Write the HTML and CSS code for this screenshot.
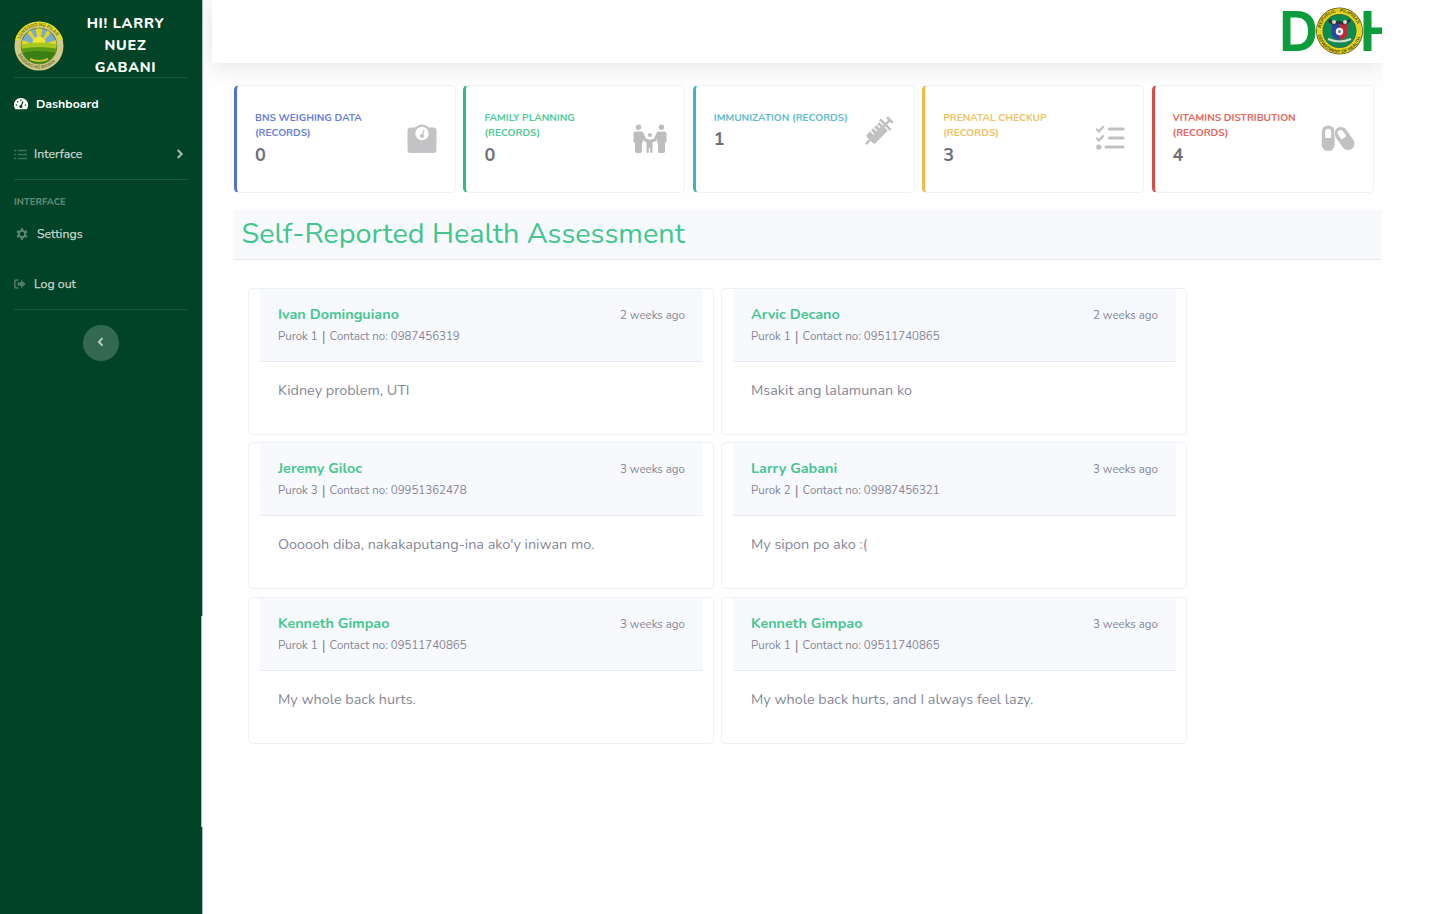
FILE: index.html
```html
<!DOCTYPE html>
<html lang="en">
<head>
<meta charset="utf-8">
<title>Dashboard</title>
<link rel="stylesheet" href="styles.css">
</head>
<body>
<div class="app">
  <aside class="sidebar">
    <div class="brand">
      <svg class="seal" viewBox="0 0 50 50">
        <defs><path id="sealTop" d="M5 25a20 20 0 0 1 40 0"/><path id="sealBottom" d="M2.5 25a22.5 22.5 0 0 0 45 0"/><clipPath id="sealClip"><circle cx="25" cy="25" r="17.5"/></clipPath></defs>
        <circle cx="25" cy="25" r="24.5" fill="#cfc886"/>
        <path d="M3 19a23 23 0 0 1 44 0" fill="none" stroke="#e4db20" stroke-width="4"/>
        <circle cx="25" cy="25" r="18.3" fill="#5d7a2a"/>
        <g clip-path="url(#sealClip)">
          <path fill="#78acc8" d="M6 6h38v20H6z"/>
          <path fill="#e8d51f" d="M25 25 10 8h6zM25 25 21 5h8zM25 25 34 8h6zM25 25 3 17v6zM25 25 47 17v6z"/>
          <circle cx="25" cy="22" r="6.5" fill="#f3e62c"/>
          <path fill="#a9c81f" d="M6 24q19-5 38 0v20H6z"/>
          <path fill="#5b9a16" d="M6 28q19-4 38 0v16H6z"/>
          <path fill="#397f13" d="M6 32q19-4 38 0v16H6z"/>
          <path stroke="#c8c32e" stroke-width="2" fill="none" d="M16 38q9 4 18 0"/>
        </g>
        <g class="seal-text"><text><textPath href="#sealTop" startOffset="12%">LUNGSOD NG PILAR</textPath></text><text><textPath href="#sealBottom" startOffset="12%">SAGISAG NG BAYAN</textPath></text></g>
      </svg>
      <div class="brand-name">HI! LARRY<br>NUEZ<br>GABANI</div>
    </div>
    <hr class="divider">
    <a class="nav nav-active">
      <svg class="ic-dash" viewBox="0 0 14 12"><path fill="#fff" d="M7 0a7 7 0 0 0-6 10.7q.3.6 1 .6h10q.7 0 1-.6A7 7 0 0 0 7 0z"/><path d="m7 8.5 2-5" stroke="#004326" stroke-width="1.2"/><circle cx="6.9" cy="8.5" r="1.5" fill="#004326"/><g fill="#004326"><circle cx="2.4" cy="7" r=".8"/><circle cx="3.8" cy="3.8" r=".8"/><circle cx="6.8" cy="2.3" r=".8"/><circle cx="11.5" cy="7" r=".8"/></g></svg>
      <span>Dashboard</span>
    </a>
    <a class="nav nav-interface">
      <svg class="ic-list" viewBox="0 0 13 11"><path stroke="#3c6f59" stroke-width="1.5" d="M0 1.5h2.3M0 5.5h2.3M0 9.5h2.3M4 1.5h9M4 5.5h9M4 9.5h9"/></svg>
      <span>Interface</span>
      <svg class="ic-chev" viewBox="0 0 8 10"><path d="m1.7 1 4 4-4 4" fill="none" stroke="#a3baaf" stroke-width="2.1"/></svg>
    </a>
    <hr class="divider">
    <div class="nav-heading">INTERFACE</div>
    <a class="nav nav-settings">
      <svg class="ic-gear" viewBox="0 0 12 12"><circle cx="6" cy="6" r="3.2" fill="none" stroke="#5d8775" stroke-width="2"/><path stroke="#5d8775" stroke-width="2.4" d="M6 .3v1.8M6 9.9v1.8M1.1 3.1l1.5.9M9.4 8l1.5.9M1.1 8.9 2.6 8M9.4 4l1.5-.9"/></svg>
      <span>Settings</span>
    </a>
    <a class="nav nav-logout">
      <svg class="ic-out" viewBox="0 0 12 10"><path d="M4.5 1H2Q.8 1 .8 2.2v5.6Q.8 9 2 9h2.5" fill="none" stroke="#4f7d69" stroke-width="1.5"/><path fill="#4f7d69" d="M7 .8 11.8 5 7 9.2V6.7H3.5V3.3H7z"/></svg>
      <span>Log out</span>
    </a>
    <hr class="divider">
    <button class="collapse"><svg viewBox="0 0 6 9"><path d="M4.8 1 1.6 4.4l3.2 3.4" fill="none" stroke="#c0cfc7" stroke-width="1.8"/></svg></button>
    <i class="edge"></i>
  </aside>
  <div class="content">
    <header class="topbar">
      <svg class="doh" viewBox="0 0 100 54">
        <defs><path id="dohTop" d="M38.5 27a19 19 0 0 1 38 0"/><path id="dohBottom" d="M35.5 27a22 22 0 0 0 44 0"/></defs>
        <path fill="#0b9c3c" fill-rule="evenodd" d="M.8 7H14Q33.500 7 33.500 27T14 47H.8zM8.500 13.500v27H14q12 0 12-13.500t-12-13.500z"/>
        <path fill="#0b9c3c" d="M81.500 7h8v16.500H100V30H89.500v17h-8z"/>
        <circle cx="57.500" cy="27" r="23.500" fill="#5d5520"/><circle cx="57.500" cy="27" r="22.700" fill="#e6d51b"/><circle cx="57.500" cy="27" r="17" fill="#29734a"/><circle cx="57.500" cy="27" r="16" fill="#0c8d50"/>
        <path fill="#2848a0" d="M49.500 18h8v18q-6-1-8-5z"/><path fill="#c0293b" d="M57.500 18h8v13q-2 4-8 5z"/>
        <path d="M47 16q4 5 10 2 6 3 11-2" fill="none" stroke="#2d3437" stroke-width="3"/>
        <circle cx="52" cy="18" r="2" fill="#d6d7cd"/><circle cx="63" cy="18" r="2" fill="#d6d7cd"/><circle cx="57.500" cy="27.500" r="3.700" fill="#f4f4f4"/><circle cx="57.500" cy="27.500" r="1.500" fill="#75829f"/>
        <path d="M46 35q11.500 5 23 0" fill="none" stroke="#d7ddd0" stroke-width="2"/>
        <g class="doh-text"><text><textPath href="#dohTop" startOffset="5%">REPUBLIC · PILIPINAS</textPath></text><text><textPath href="#dohBottom" startOffset="6%">DEPARTMENT OF HEALTH</textPath></text></g>
      </svg>
    </header>
    <main>
      <section class="stats">
        <article class="stat blue"><div><h2>BNS WEIGHING DATA<br>(RECORDS)</h2><b>0</b></div>
          <svg class="i-weight" viewBox="0 0 30 30"><rect x=".5" y="3.500" width="29" height="25.500" rx="3" fill="#c3c3c5"/><circle cx="15" cy="9.500" r="9" fill="#c3c3c5"/><circle cx="15" cy="9.500" r="6.700" fill="#fff"/><circle cx="15" cy="12" r="2" fill="#c3c3c5"/><path d="m15 12 2-6" stroke="#c3c3c5" stroke-width="1.300"/></svg></article>
        <article class="stat green"><div><h2>FAMILY PLANNING<br>(RECORDS)</h2><b>0</b></div>
          <svg class="i-family" viewBox="0 0 34 30"><g fill="#bdbdbf"><circle cx="5.500" cy="3.200" r="2.700"/><circle cx="28.500" cy="3.200" r="2.700"/><circle cx="17" cy="11" r="2"/><path d="M2.500 7.500h6q1.500 0 2 1.500l2.300 5.500 3.200 1h2l3.200-1L23.500 9q.5-1.500 2-1.500h6Q33.500 7.500 33.500 10v7q0 1.500-1.500 2v8q0 2-1.500 2h-4q-1.500 0-1.500-2v-8l-1-1v-3l-1 2-3.500 1.500v9q0 1.500-1.200 1.500t-1.200-1.500V24h-1.200v3.500q0 1.500-1.200 1.500t-1.200-1.500v-9L11 17l-1-2v3l-1 1v8q0 2-1.500 2h-4Q2 29 2 27v-8Q.500 18.500.500 17v-7Q.500 7.500 2.500 7.500z"/></g></svg></article>
        <article class="stat teal"><div><h2>IMMUNIZATION (RECORDS)</h2><b>1</b></div>
          <svg class="i-syringe" viewBox="0 0 30 30"><g transform="rotate(-45 15 15)" stroke="#c1c1c3" fill="#c1c1c3"><path d="M-3.500 15h8" stroke-width="2.600"/><path d="M3 9h18.500v12H3l-1-2v-8z" stroke="none"/><path d="M24 7.500v15M30.500 11v8M21 15h9" stroke-width="2.600"/><path d="M9 9v4.500M13.500 9v4.500M18 9v4.500" stroke="#fff" stroke-width="1.300"/></g></svg></article>
        <article class="stat yellow"><div><h2>PRENATAL CHECKUP<br>(RECORDS)</h2><b>3</b></div>
          <svg class="i-tasks" viewBox="0 0 30 30"><g fill="none" stroke="#c1c1c3" stroke-linecap="round" stroke-linejoin="round"><path stroke-width="2.300" d="m2 6.500 2 2 4-4.500M2 15.500l2 2 4-4.500"/><path stroke-width="3.200" d="M14.500 6H28M14.500 15H28M11 24h17"/></g><circle cx="3.800" cy="24" r="2.600" fill="#c1c1c3"/></svg></article>
        <article class="stat red"><div><h2>VITAMINS DISTRIBUTION<br>(RECORDS)</h2><b>4</b></div>
          <svg class="i-caps" viewBox="0 0 34 30"><rect x=".8" y="2.500" width="12.800" height="25.500" rx="6.400" fill="#c1c1c3"/><path fill="#fff" d="M4.200 15V9q0-3.300 3-3.300T10.200 9v6z"/><g transform="rotate(-35 23.500 15.500)"><rect x="16.800" y="2.500" width="13.400" height="26" rx="6.700" fill="#c1c1c3" stroke="#fff" stroke-width=".6"/><path fill="#fff" d="M20.500 14.500V9q0-3.300 3-3.300t3 3.300v5.500z"/></g></svg></article>
      </section>
      <h1 class="title">Self-Reported Health Assessment</h1>
      <section class="reports">
        <article class="report"><header><div><h3>Ivan Dominguiano</h3><p><span>Purok 1</span><i>|</i><span>Contact no: 0987456319</span></p></div><time>2 weeks ago</time></header><p class="msg">Kidney problem, UTI</p></article>
        <article class="report"><header><div><h3>Arvic Decano</h3><p><span>Purok 1</span><i>|</i><span>Contact no: 09511740865</span></p></div><time>2 weeks ago</time></header><p class="msg">Msakit ang lalamunan ko</p></article>
        <article class="report"><header><div><h3>Jeremy Giloc</h3><p><span>Purok 3</span><i>|</i><span>Contact no: 09951362478</span></p></div><time>3 weeks ago</time></header><p class="msg">Oooooh diba, nakakaputang-ina ako'y iniwan mo.</p></article>
        <article class="report"><header><div><h3>Larry Gabani</h3><p><span>Purok 2</span><i>|</i><span>Contact no: 09987456321</span></p></div><time>3 weeks ago</time></header><p class="msg">My sipon po ako :(</p></article>
        <article class="report"><header><div><h3>Kenneth Gimpao</h3><p><span>Purok 1</span><i>|</i><span>Contact no: 09511740865</span></p></div><time>3 weeks ago</time></header><p class="msg">My whole back hurts.</p></article>
        <article class="report"><header><div><h3>Kenneth Gimpao</h3><p><span>Purok 1</span><i>|</i><span>Contact no: 09511740865</span></p></div><time>3 weeks ago</time></header><p class="msg">My whole back hurts, and I always feel lazy.</p></article>
      </section>
    </main>
  </div>
</div>
</body>
</html>
```
FILE: styles.css
```css
* { box-sizing: border-box; }
body { margin: 0; background: #fefefe; font-family: Nunito, Lato, "Open Sans", sans-serif; color: #858796; overflow: hidden; }
h1, h2, h3, p { margin: 0; font-weight: 400; }
svg { display: block; flex: none; }
.app { display: flex; height: 914px; }

.sidebar { position: relative; width: 202px; flex: none; background: #004326; padding: 0 15px 0 14px; box-shadow: 1px 0 #a9c0b5; z-index: 2; }
.edge { position: absolute; right: -1px; top: 616px; width: 2px; height: 211px; background: linear-gradient(90deg, #a9c0b5 50%, #fefefe 50%); }
.brand { display: flex; height: 77px; align-items: flex-start; }
.seal { width: 50px; height: 50px; margin-top: 21px; }
.seal-text { font-size: 4.5px; font-weight: 700; fill: #66682a; }
.brand-name { width: 123px; padding-top: 12px; text-align: center; font-size: 14.4px; font-weight: 800; line-height: 22px; letter-spacing: .72px; color: #fff; }
.divider { margin: 0; border: 0; height: 1px; background: #1b583d; }
.nav { display: flex; align-items: center; height: 50px; font-size: 12.3px; color: #c8d5ce; -webkit-text-stroke: .25px; }
.nav-active { height: 52px; font-weight: 700; color: #fff; -webkit-text-stroke: 0; }
.ic-dash { width: 14px; height: 12px; margin-right: 8px; }
.nav-interface { height: 49px; padding-bottom: 1px; }
.ic-list { width: 13px; height: 11px; margin-right: 7px; }
.ic-chev { width: 8px; height: 10px; margin-left: auto; margin-right: 3px; }
.nav-heading { height: 29px; padding-top: 16px; line-height: 12px; font-size: 9.4px; font-weight: 800; color: #5c8773; }
.ic-gear { width: 12px; height: 12px; margin: 0 9px 0 2px; }
.ic-out { width: 12px; height: 10px; margin-right: 8px; }
.collapse { display: flex; align-items: center; justify-content: center; width: 36px; height: 36px; margin: 15px 0 0 69px; padding: 0 2px 2px 0; border: 0; border-radius: 50%; background: #336951; }
.collapse svg { width: 7px; height: 10px; }

.content { width: 1180px; overflow: hidden; padding-left: 10px; }
.topbar { height: 63px; display: flex; justify-content: flex-end; background: #fff; box-shadow: 0 2px 25px rgba(58, 59, 69, .14); padding-top: 4px; }
.doh { width: 100px; height: 54px; }
.doh-text { font: 700 4.5px "Liberation Sans", sans-serif; fill: #4f4c18; }
main { padding: 22px 1px 0 22px; }
.stats { display: grid; grid-template-columns: repeat(5, 222px); column-gap: 7.4px; }
.stat { display: flex; justify-content: space-between; height: 108px; padding: 25px 18px 0 18px; background: #fff; border: 1px solid #eff1f8; border-left: 3px solid; border-radius: 5px; }
.stat h2 { font-size: 10.1px; font-weight: 700; line-height: 15px; white-space: nowrap; color: inherit; }
.stat b { display: block; margin-top: 4px; font-size: 18px; line-height: 21px; color: #6e7079; }
.blue { border-left-color: #5470d2; color: #6580dc; }
.green { border-left-color: #2bbf83; color: #4fca98; }
.teal { border-left-color: #40b4c6; color: #5dbdcd; }
.yellow { border-left-color: #edbc45; color: #f1c162; }
.red { border-left-color: #dc4b42; color: #e3655c; }
.teal b { margin-top: 3px; }
.stat svg { margin-top: 13px; }
.i-weight, .i-syringe, .i-tasks { width: 30px; height: 30px; }
.i-family, .i-caps { width: 34px; height: 30px; }
.stat .i-family { margin-right: -1px; }
.stat .i-tasks, .stat .i-caps { margin-top: 12px; }
.stat .i-syringe { margin-top: 5px; margin-right: 2px; overflow: visible; }

.title { height: 50px; margin-top: 17px; padding-left: 7.5px; background: #f8f9fc; border-bottom: 1px solid #e6e8f1; font-size: 28.8px; line-height: 47px; color: #41c68f; }
.reports { display: grid; grid-template-columns: 466px 466px; column-gap: 7px; row-gap: 7.4px; padding: 28px 0 0 14px; }
.report { height: 147px; padding: 0 10px 0 11px; background: #fff; border: 1px solid #eef0f7; border-radius: 5px; }
.report header { display: flex; justify-content: space-between; height: 73px; padding: 15px 18px 0; background: #f8f9fc; border-bottom: 1px solid #e9ebf3; }
.report h3 { font-size: 14.4px; font-weight: 700; line-height: 20px; color: #44c792; white-space: nowrap; }
.report header p { display: flex; align-items: center; height: 24px; font-size: 11.5px; white-space: nowrap; }
.report header i { margin: 0 4px; font-style: normal; font-size: 14.4px; }
.report time { font-size: 11.5px; line-height: 22px; }
.msg { padding: 17px 18px 0; font-size: 14.4px; line-height: 22px; white-space: nowrap; }
```
